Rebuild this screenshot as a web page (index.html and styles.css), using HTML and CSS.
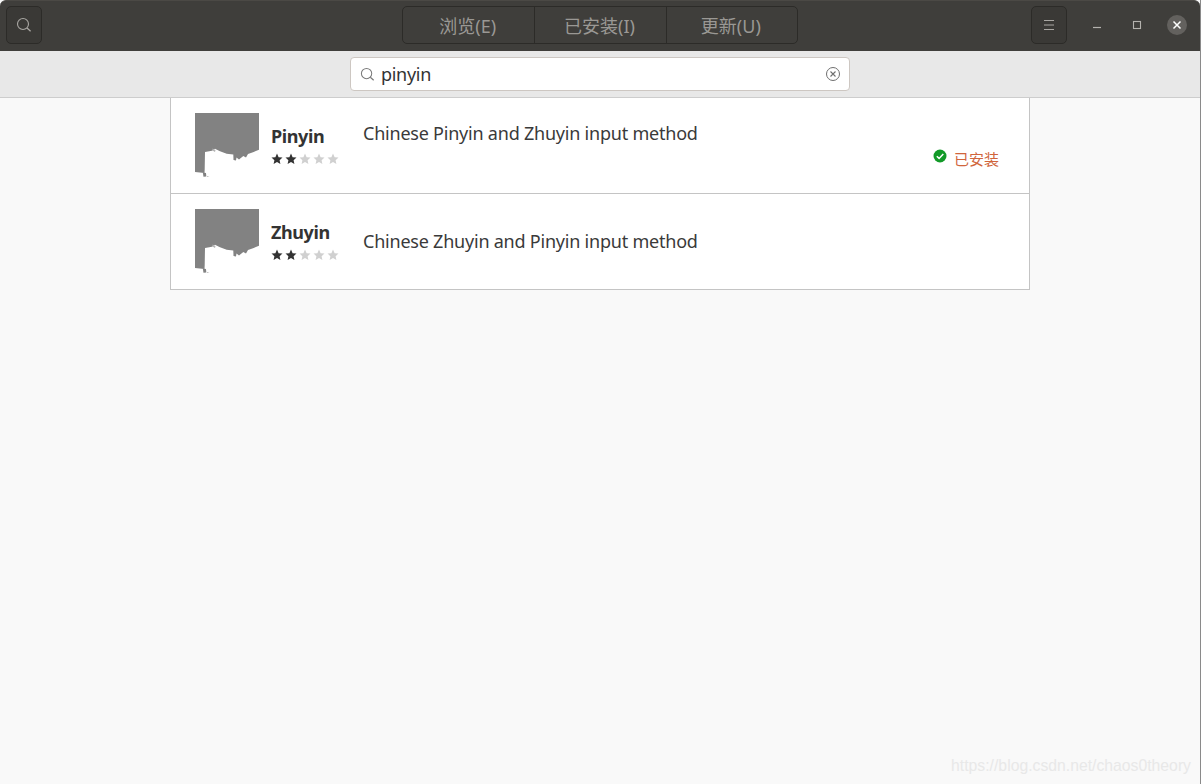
FILE: index.html
```html
<!DOCTYPE html>
<html lang="zh">
<head>
<meta charset="utf-8">
<title>Ubuntu Software</title>
<link rel="stylesheet" href="styles.css">
</head>
<body>
<svg class="defs" width="0" height="0" aria-hidden="true">
  <symbol id="star" viewBox="0 0 12 12"><path d="M6 .6l1.6 3.6 3.9.4-2.9 2.6.8 3.8L6 9.1l-3.4 1.9.8-3.8L.5 4.6l3.9-.4z"/></symbol>
  <symbol id="pkg" viewBox="0 0 64 64"><path d="M0 0H64V36.700L58 39.300 53 41 51 44.500 48.300 43 44 46.500 41.500 44.500 41 47.500 38.500 47 38.300 41.500 31.700 40.700 25 38.300 20 35.700 17 37.700 10 39 9.700 56 9.500 60 0 59Z"/><path d="M7.800 59.500L11 60 11.300 63.500 8.500 63.800Z"/><path d="M17.500 35.500l3 1.500-.5 2-2.500-1.500zM12 63l2.500 1-2.500.3z" fill="#b5b5b5"/></symbol>
  <symbol id="magnifier" viewBox="0 0 16 16"><circle cx="7" cy="7" r="5.500" fill="none" stroke="currentColor" stroke-width="1.100"/><path d="M11 11l3.600 3.200" fill="none" stroke="currentColor" stroke-width="1.300"/></symbol>
</svg>
<div class="app">
  <header class="titlebar">
    <div class="bar-left">
      <button class="tool-btn"><svg class="tool-icon"><use href="#magnifier"/></svg></button>
    </div>
    <nav class="tabs">
      <span class="tab">浏览(E)</span>
      <span class="tab">已安装(I)</span>
      <span class="tab">更新(U)</span>
    </nav>
    <div class="bar-right">
      <button class="tool-btn">
        <svg class="tool-icon" viewBox="0 0 16 16"><path d="M3 3.500h10M3 8h10M3 12.500h10" stroke="currentColor" stroke-width="1" fill="none"/></svg>
      </button>
      <div class="win-controls">
        <span class="win-btn"><svg class="win-icon" viewBox="0 0 16 16"><path d="M4 10.500h8" stroke="currentColor" stroke-width="1.200"/></svg></span>
        <span class="win-btn"><svg class="win-icon" viewBox="0 0 16 16"><rect x="4.500" y="4.500" width="7" height="7" fill="none" stroke="currentColor" stroke-width="1.100"/></svg></span>
        <span class="win-btn win-close"><svg class="win-icon" viewBox="0 0 16 16"><path d="M4.500 4.500l7 7M11.500 4.500l-7 7" stroke="#fff" stroke-width="1.500"/></svg></span>
      </div>
    </div>
  </header>
  <div class="searchbar">
    <div class="search-entry">
      <svg class="entry-icon"><use href="#magnifier"/></svg>
      <span class="entry-text">pinyin</span>
      <svg class="entry-clear" viewBox="0 0 16 16"><circle cx="8" cy="8" r="6.500" fill="none" stroke="currentColor" stroke-width="1"/><path d="M5.500 5.500l5 5M10.500 5.500l-5 5" stroke="currentColor" stroke-width="1.100"/></svg>
    </div>
  </div>
  <main class="content">
    <div class="results">
      <article class="row">
        <svg class="pkg-icon"><use href="#pkg"/></svg>
        <div class="name-col">
          <div class="name">Pinyin</div>
          <div class="stars"><svg class="star on"><use href="#star"/></svg><svg class="star on"><use href="#star"/></svg><svg class="star"><use href="#star"/></svg><svg class="star"><use href="#star"/></svg><svg class="star"><use href="#star"/></svg></div>
        </div>
        <div class="desc desc-top">Chinese Pinyin and Zhuyin input method</div>
        <div class="status">
          <svg class="check" viewBox="0 0 14 14"><circle cx="7" cy="7" r="6.500" fill="#129a28"/><path d="M3.800 7.200l2.300 2.200 4.200-4.400" fill="none" stroke="#fff" stroke-width="1.500"/></svg>
          <span class="status-text">已安装</span>
        </div>
      </article>
      <article class="row">
        <svg class="pkg-icon"><use href="#pkg"/></svg>
        <div class="name-col">
          <div class="name">Zhuyin</div>
          <div class="stars"><svg class="star on"><use href="#star"/></svg><svg class="star on"><use href="#star"/></svg><svg class="star"><use href="#star"/></svg><svg class="star"><use href="#star"/></svg><svg class="star"><use href="#star"/></svg></div>
        </div>
        <div class="desc">Chinese Zhuyin and Pinyin input method</div>
      </article>
    </div>
  </main>
  <div class="watermark">https://blog.csdn.net/chaos0theory</div>
</div>
</body>
</html>
```
FILE: styles.css
```css
* { box-sizing: border-box; }
html, body { margin: 0; padding: 0; background: #fff; }
body { font-family: "Noto Sans", "Noto Sans CJK SC", sans-serif; }
.defs { position: absolute; }
.app {
  position: relative;
  width: 1201px;
  height: 784px;
  display: flex;
  flex-direction: column;
  background: #f9f9f9;
  border-right: 1px solid #8a8a8a;
  overflow: hidden;
}
.titlebar {
  height: 51px;
  flex: none;
  display: grid;
  grid-template-columns: 1fr 396px 1fr;
  align-items: start;
  padding-top: 5px;
  background: #3f3e3b;
  border-top: 1px solid #4b4945;
  border-radius: 6px 6px 0 0;
}
.bar-left, .bar-right { display: flex; align-items: flex-start; }
.bar-left { padding-left: 6px; }
.bar-right { padding-left: 233px; }
.tool-btn {
  width: 36px;
  height: 38px;
  padding: 0;
  display: flex;
  align-items: center;
  justify-content: center;
  color: #a9a7a3;
  background: #3a3936;
  border: 1px solid #2c2b28;
  border-radius: 5px;
}
.tool-icon { width: 16px; height: 16px; }
.tabs {
  height: 38px;
  display: grid;
  grid-template-columns: repeat(3, 1fr);
  border: 1px solid #2c2b28;
  border-radius: 5px;
  background: #3f3e3b;
}
.tab {
  display: flex;
  align-items: center;
  justify-content: center;
  padding-right: 2px;
  font-size: 18px;
  color: #9a9894;
  border-left: 1px solid #2c2b28;
}
.tab:first-child { border-left: 0; }
.win-controls { display: flex; padding-left: 20px; gap: 20px; height: 38px; align-items: center; }
.win-btn {
  width: 20px;
  height: 20px;
  display: flex;
  align-items: center;
  justify-content: center;
  color: #b4b2ae;
  border-radius: 50%;
}
.win-icon { width: 16px; height: 16px; }
.win-close { background: #63615e; }
.searchbar {
  height: 47px;
  flex: none;
  display: flex;
  justify-content: center;
  padding-top: 6px;
  background: #e8e8e8;
  border-bottom: 1px solid #cdcdcd;
}
.search-entry {
  width: 500px;
  height: 34px;
  display: flex;
  align-items: center;
  padding: 0 9px;
  background: #fff;
  border: 1px solid #cdc7c2;
  border-radius: 4px;
}
.entry-icon { width: 15px; height: 15px; color: #7a7a7a; flex: none; }
.entry-text { margin-left: 6px; flex: 1; font-size: 18px; letter-spacing: -0.3px; color: #333; }
.entry-clear { width: 16px; height: 16px; color: #6f6f6f; flex: none; margin-right: -1px; }
.content { flex: 1; display: flex; justify-content: center; }
.results { width: 860px; }
.row {
  height: 96px;
  display: flex;
  padding: 15px 30px 0 24px;
  background: #fff;
  border: 1px solid #c4c4c4;
  border-top: 0;
}
.pkg-icon { width: 64px; height: 64px; fill: #828282; flex: none; }
.name-col { width: 92px; margin-left: 12px; flex: none; }
.name { margin-top: 11px; font-size: 18px; line-height: 25px; font-weight: 700; letter-spacing: -0.4px; color: #333; }
.stars { display: flex; margin-top: 4px; gap: 2px; }
.star { width: 12px; height: 12px; fill: #d0d0d0; }
.star.on { fill: #333; }
.desc { margin-top: 20px; font-size: 18px; line-height: 25px; letter-spacing: -0.22px; color: #3a3a3a; }
.desc-top { margin-top: 8px; }
.status {
  margin-left: auto;
  margin-top: 35px;
  display: flex;
  align-items: flex-start;
  height: 22px;
}
.check { width: 14px; height: 14px; margin-top: 1px; }
.status-text { margin-left: 7px; font-size: 15px; line-height: 22px; color: #d0653c; }
.watermark {
  position: absolute;
  right: 9px;
  top: 755px;
  font-family: "Liberation Sans", sans-serif;
  font-size: 15.75px;
  line-height: 22px;
  color: #e8e8e8;
}
```
